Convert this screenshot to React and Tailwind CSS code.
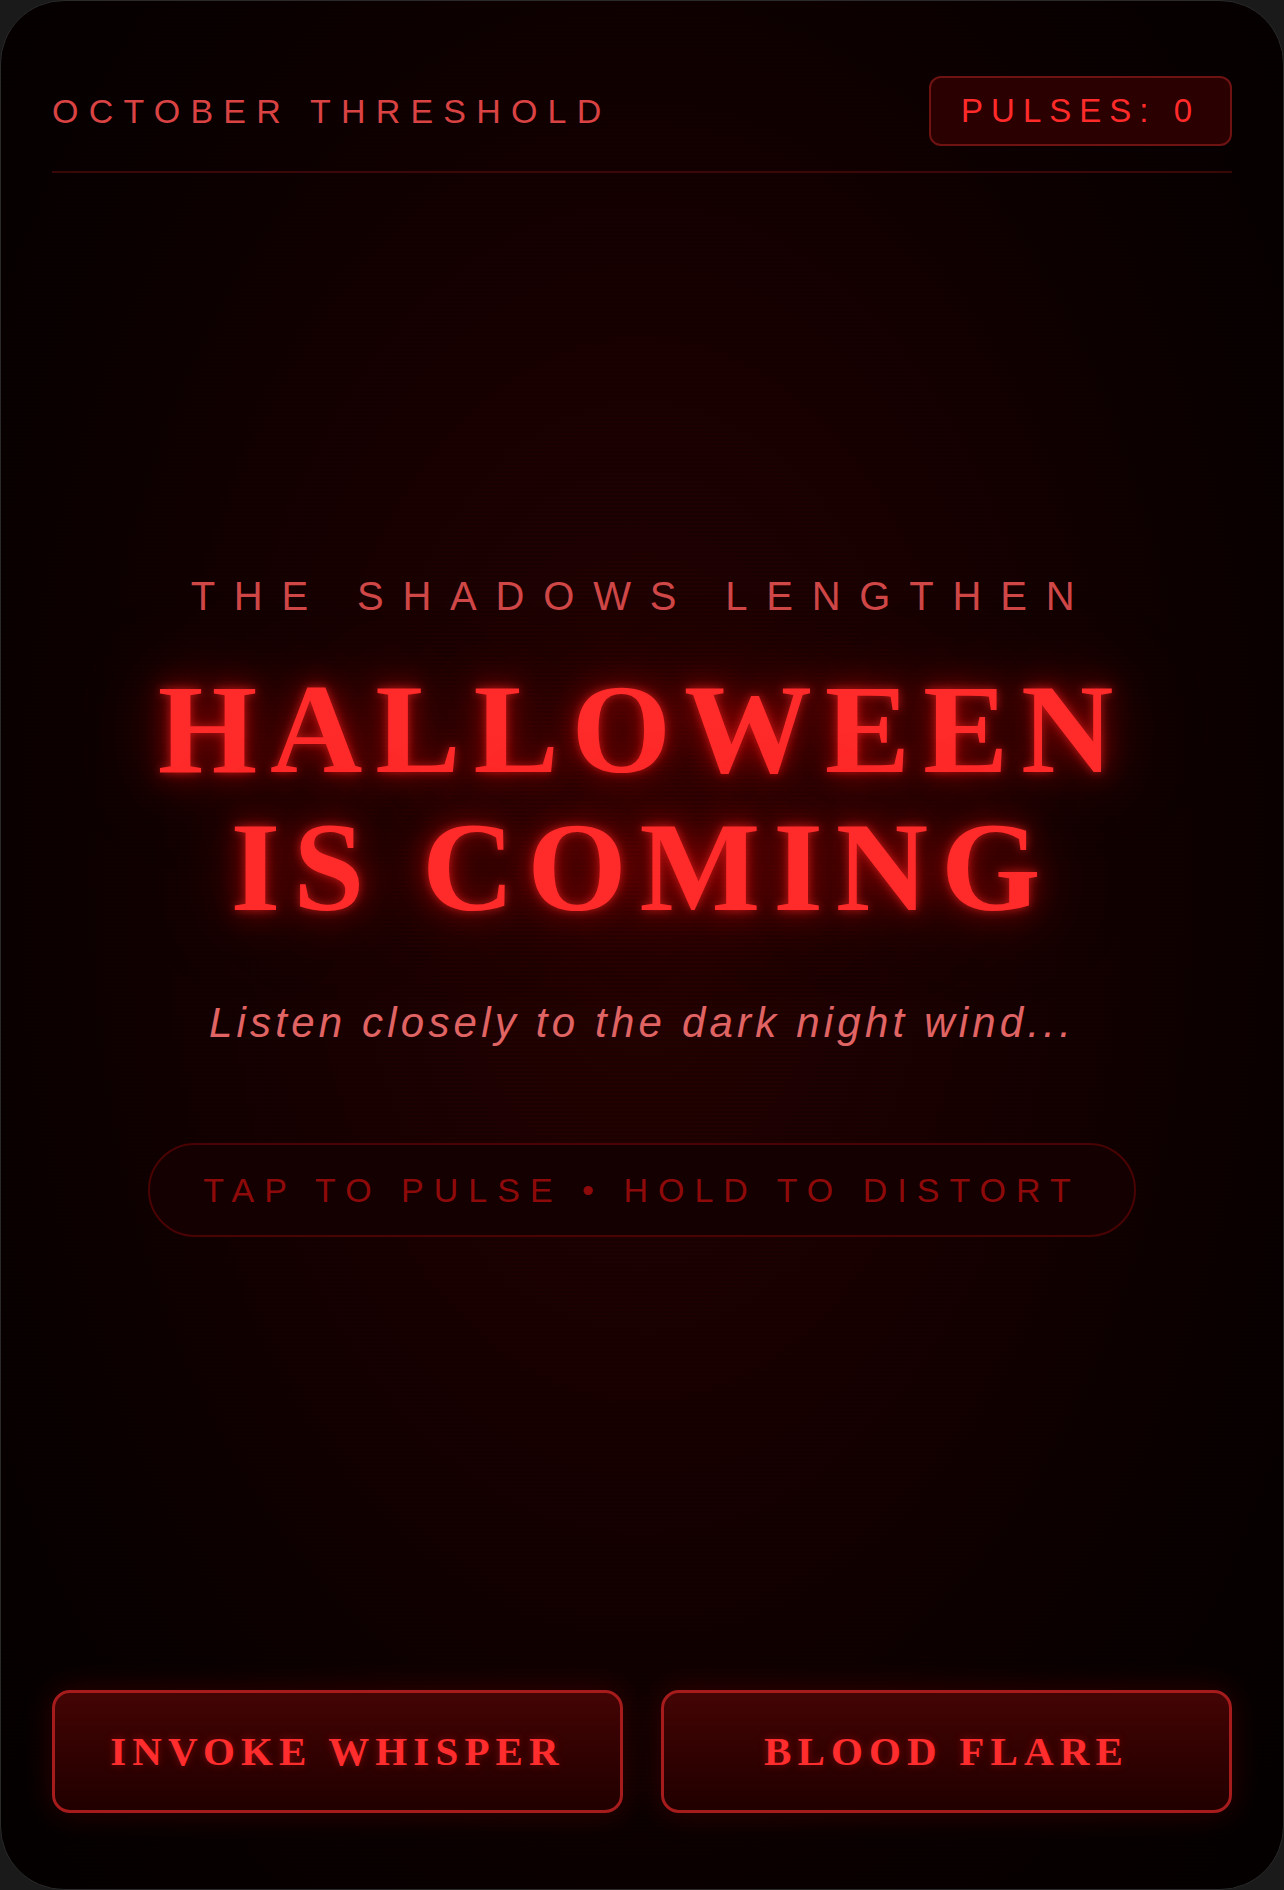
import React from 'react';

const sans = "font-['Liberation_Sans',Arial,sans-serif]";
const serif = "font-['Liberation_Serif','Times_New_Roman',serif]";

const Header = ({ pulses }) => (
  <header className="relative flex items-center justify-between border-b-2 border-[#3a0808] pb-[25px]">
    <span className="text-[34px] leading-[39px] tracking-[0.3em] text-[#d94343]">
      OCTOBER THRESHOLD
    </span>
    <div className="rounded-xl border-2 border-[#6e1212] bg-[#2a0000] px-[30px] py-[13px] text-[33px] leading-[40px] tracking-[8px] text-[#ff2b2b]">
      PULSES: {pulses}
    </div>
  </header>
);

const ActionButton = ({ children }) => (
  <button
    type="button"
    className={`${serif} h-[123px] rounded-[18px] border-[3px] border-[#a61b1b] bg-linear-to-b from-[#440404] to-[#210000] text-[41px] font-bold tracking-[0.15em] text-[#ff2d2d] shadow-[0_0_30px_rgba(170,0,0,0.25)] [text-shadow:0_0_8px_rgba(255,30,30,0.35)]`}
  >
    {children}
  </button>
);

export default function App() {
  return (
    <div className={`${sans} min-h-screen bg-[#1a1a1a]`}>
      <div className="relative flex min-h-screen flex-col overflow-hidden rounded-[64px] border border-[#2a2a2a] bg-[radial-gradient(ellipse_at_50%_46%,#2a0202_0%,#190000_38%,#0a0000_72%,#040000_100%)] px-[51px] pt-[75px] pb-[76px]">
        {/* scanlines, under the content */}
        <div className="pointer-events-none absolute inset-0 bg-[repeating-linear-gradient(0deg,rgba(0,0,0,0.16)_0px,rgba(0,0,0,0.16)_2px,transparent_2px,transparent_4px)]" />

        <Header pulses={0} />

        <main className="relative flex flex-1 flex-col items-center justify-center pb-[54px] text-center">
          <p className="text-[40px] leading-[48px] tracking-[0.47em] text-[#cf4747]">
            THE SHADOWS LENGTHEN
          </p>
          <h1
            className={`${serif} mt-[40px] text-[128px] font-bold leading-[138px] tracking-[0.1em] text-[#ff2a2a] [text-shadow:0_0_10px_rgba(255,40,40,0.6),0_0_28px_rgba(255,0,0,0.5),0_0_60px_rgba(200,0,0,0.45),0_0_100px_rgba(160,0,0,0.35)]`}
          >
            HALLOWEEN
            <br />
            IS COMING
          </h1>
          <p className="mt-[62px] text-[42px] italic leading-[50px] tracking-[0.1em] text-[#e06464]">
            Listen closely to the dark night wind...
          </p>
          <div className="mt-[95px] rounded-full border-2 border-[#4a0303] bg-[#140000] px-[53px] py-[25px] text-[34px] leading-[40px] tracking-[10px] text-[#8e0a0a]">
            TAP TO PULSE • HOLD TO DISTORT
          </div>
        </main>

        <div className="relative grid grid-cols-2 gap-[38px]">
          <ActionButton>INVOKE WHISPER</ActionButton>
          <ActionButton>BLOOD FLARE</ActionButton>
        </div>
      </div>
    </div>
  );
}
